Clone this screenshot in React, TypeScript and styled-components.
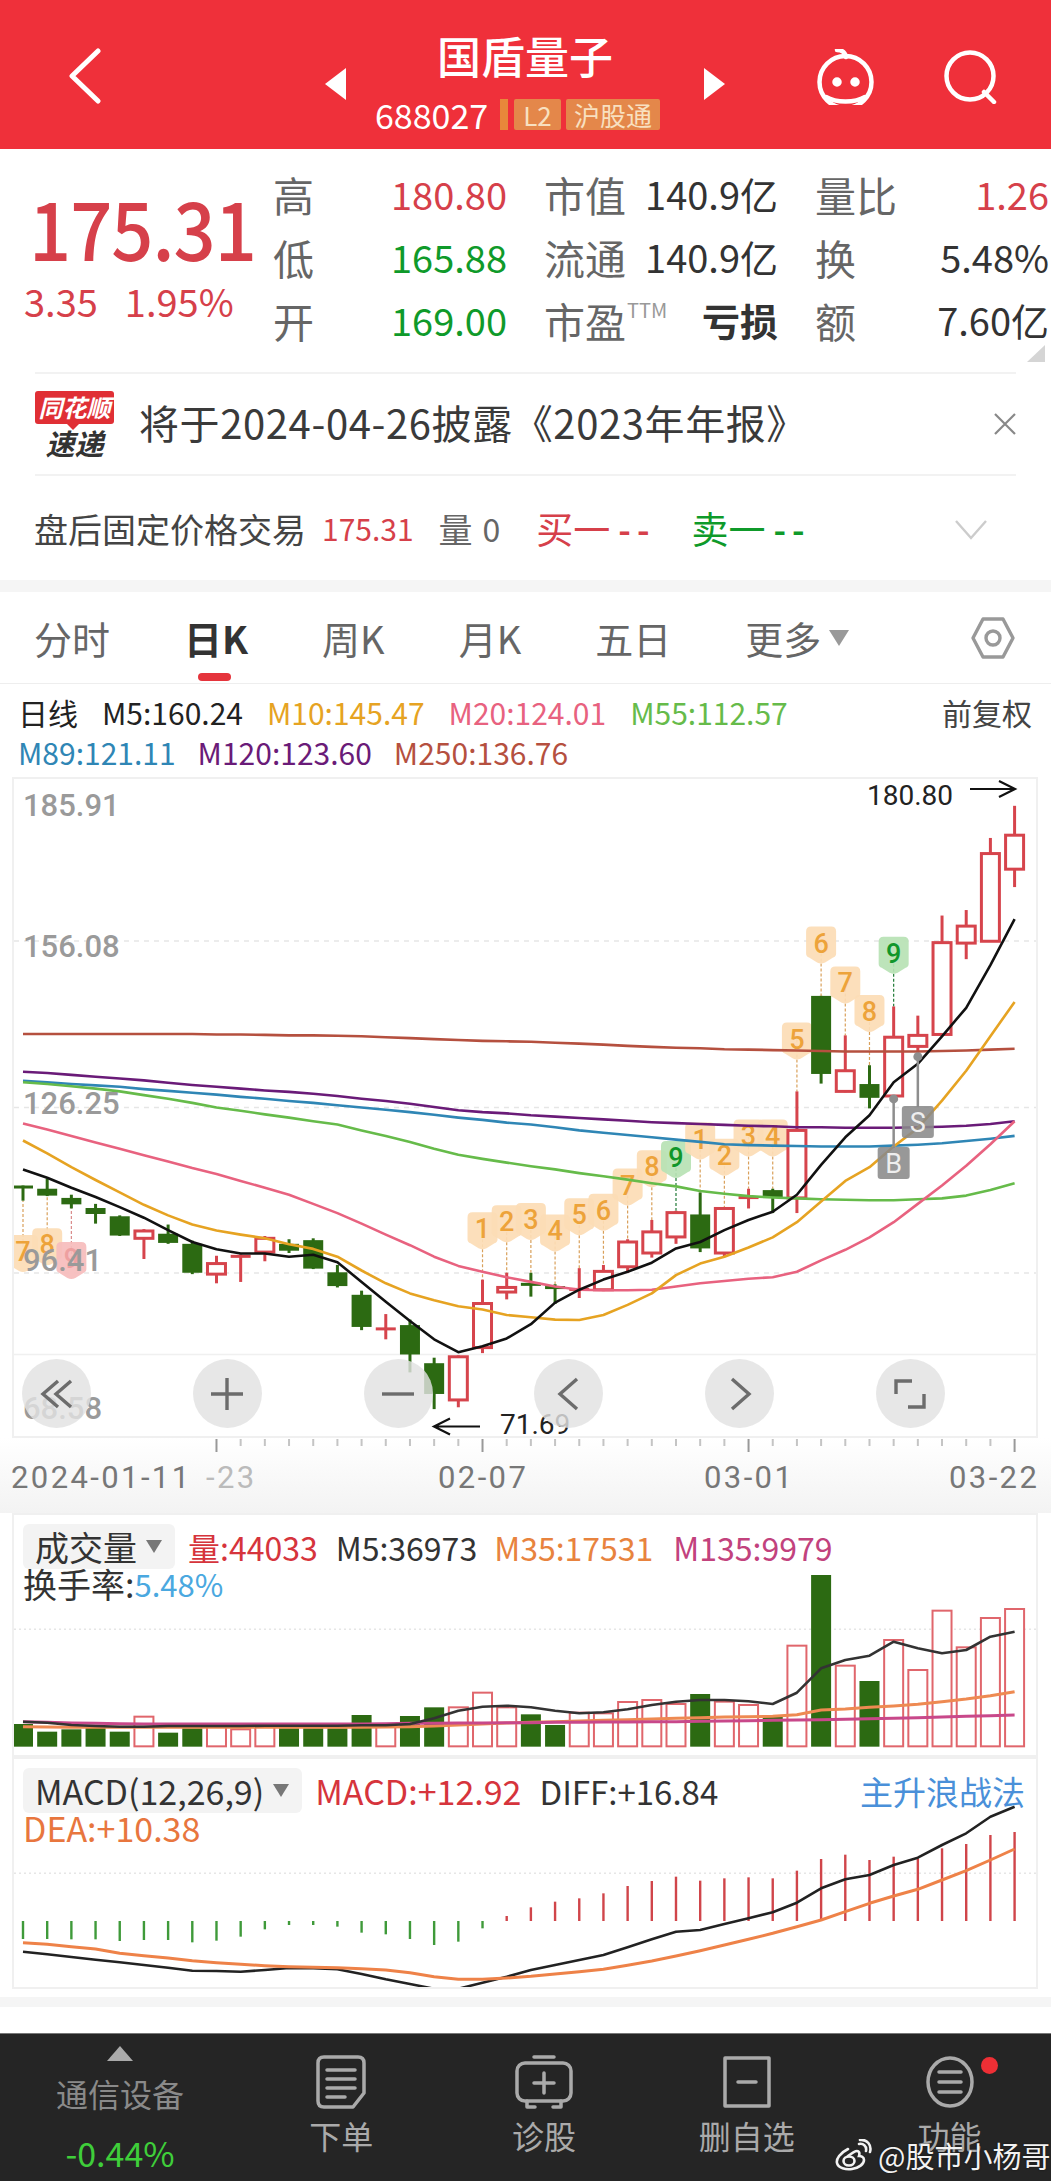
import React from 'react'
import styled, { createGlobalStyle } from 'styled-components'

const GlobalStyle = createGlobalStyle`
  html, body {
    margin: 0;
    padding: 0;
    background: #fff;
  }
  body {
    font-family: "Noto Sans CJK SC", "Liberation Sans", sans-serif;
    color: #333;
  }
`

const RED = '#d6404a'
const GREEN = '#0f9a2a'

// chart data was read off in trace units, these bring it to page pixels
const cx = (i: number) => 23 + 24.185 * i
const ky = (v: number) => 770 + v / 2.178
const vy = (v: number) => 1500 + v / 3
const my = (v: number) => 1750 + v / 3

type Candle = [string, number, number, number, number]

const candles: Candle[] = [
  ['g', 905, 905, 909, 938], ['g', 890, 912, 927, 928], ['g', 925, 932, 946, 955], ['g', 945, 954, 967, 988],
  ['g', 970, 972, 1014, 1015], ['r', 1000, 1004, 1020, 1065], ['g', 990, 1010, 1030, 1032], ['g', 1025, 1032, 1095, 1098],
  ['r', 1058, 1075, 1098, 1118], ['r', 1055, 1056, 1058, 1115], ['r', 1015, 1020, 1050, 1070], ['g', 1022, 1032, 1047, 1052],
  ['g', 1020, 1024, 1086, 1087], ['g', 1078, 1094, 1124, 1127], ['g', 1134, 1143, 1213, 1220], ['r', 1185, 1214, 1217, 1240],
  ['g', 1197, 1209, 1273, 1312], ['g', 1280, 1292, 1359, 1392], ['r', 1275, 1278, 1372, 1388], ['r', 1110, 1162, 1258, 1270],
  ['r', 1095, 1127, 1137, 1153], ['g', 1095, 1117, 1120, 1147], ['g', 1120, 1124, 1126, 1163], ['r', 1085, 1128, 1132, 1150],
  ['r', 1078, 1092, 1132, 1135], ['r', 1022, 1028, 1082, 1095], ['r', 980, 1006, 1052, 1062], ['r', 960, 964, 1017, 1032],
  ['g', 920, 968, 1042, 1050], ['r', 955, 955, 1052, 1060], ['r', 912, 928, 932, 955], ['g', 912, 915, 930, 965],
  ['r', 700, 785, 932, 965], ['g', 492, 492, 662, 683], ['r', 578, 655, 700, 702], ['g', 643, 684, 714, 737],
  ['r', 515, 582, 710, 712], ['r', 535, 578, 602, 625], ['r', 317, 376, 576, 578], ['r', 305, 340, 377, 412],
  ['r', 148, 182, 373, 373], ['r', 78, 142, 216, 255],
]

const maLines: { color: string; data: number[] }[] = [
  { color: '#b5503f', data: [575, 575, 575, 575, 575, 575, 575, 575, 576, 576, 577, 578, 578, 579, 580, 582, 584, 586, 588, 590, 591, 592, 594, 596, 598, 601, 603, 605, 606, 608, 609, 610, 611, 612, 613, 613, 613, 613, 612, 611, 609, 607] },
  { color: '#6a1b78', data: [657, 660, 664, 668, 672, 676, 681, 686, 690, 694, 698, 701, 705, 710, 716, 721, 727, 734, 741, 745, 748, 752, 755, 758, 761, 764, 767, 769, 771, 773, 775, 776, 778, 778, 779, 779, 779, 778, 777, 775, 771, 765] },
  { color: '#2f86b5', data: [677, 680, 684, 687, 690, 695, 699, 703, 707, 712, 716, 721, 725, 730, 735, 740, 745, 751, 757, 762, 768, 772, 778, 785, 790, 795, 800, 805, 810, 815, 817, 818, 819, 820, 820, 820, 818, 816, 813, 808, 803, 797] },
  { color: '#66bb4a', data: [680, 684, 689, 694, 700, 708, 716, 725, 735, 742, 750, 757, 765, 772, 785, 797, 810, 825, 838, 847, 855, 863, 870, 878, 885, 892, 900, 907, 917, 923, 928, 931, 933, 935, 936, 937, 937, 935, 933, 927, 915, 900] },
  { color: '#e8627f', data: [770, 783, 797, 811, 825, 839, 853, 867, 880, 895, 910, 925, 945, 965, 988, 1012, 1035, 1060, 1080, 1093, 1105, 1115, 1125, 1132, 1133, 1133, 1132, 1125, 1118, 1113, 1108, 1105, 1093, 1068, 1045, 1018, 985, 945, 905, 862, 815, 765] },
  { color: '#e6a322', data: [807, 835, 865, 893, 920, 947, 970, 990, 1003, 1012, 1020, 1033, 1043, 1060, 1090, 1118, 1140, 1155, 1168, 1175, 1187, 1192, 1197, 1198, 1187, 1165, 1140, 1100, 1075, 1060, 1040, 1018, 985, 940, 895, 865, 820, 780, 720, 655, 580, 505] },
  { color: '#111', data: [870, 888, 910, 930, 952, 975, 1002, 1028, 1044, 1053, 1053, 1060, 1056, 1072, 1115, 1158, 1200, 1240, 1268, 1255, 1238, 1207, 1160, 1132, 1110, 1093, 1073, 1042, 1028, 1002, 980, 962, 925, 860, 800, 752, 680, 640, 580, 518, 425, 325] },
]

type Tag = [number, number, string, 'o' | 'g' | 'p']

const tags: Tag[] = [
  [0, 1050, '7', 'o'], [1, 1035, '8', 'o'], [2, 1065, '9', 'p'],
  [19, 1000, '1', 'o'], [20, 985, '2', 'o'], [21, 980, '3', 'o'], [22, 1005, '4', 'o'],
  [23, 970, '5', 'o'], [24, 960, '6', 'o'], [25, 905, '7', 'o'], [26, 865, '8', 'o'],
  [27, 845, '9', 'g'], [28, 805, '1', 'o'], [29, 840, '2', 'o'], [30, 798, '3', 'o'],
  [31, 798, '4', 'o'], [32, 587, '5', 'o'], [33, 378, '6', 'o'], [34, 465, '7', 'o'],
  [35, 527, '8', 'o'], [36, 400, '9', 'g'],
]

const tagStyle = {
  o: { fill: '#fcdcb5', text: '#eda33a', stem: '#d9a05a' },
  g: { fill: '#b7e2b4', text: '#10962a', stem: '#1f7a35' },
  p: { fill: '#f6bcbc', text: '#eea0a0', stem: '#d98a8a' },
}

const volumes: [string, number][] = [
  ['g', 672], ['g', 695], ['g', 688], ['g', 680], ['g', 695], ['r', 650], ['g', 698], ['g', 685], ['r', 680], ['r', 688],
  ['r', 680], ['g', 685], ['g', 685], ['g', 685], ['g', 645], ['r', 680], ['g', 648], ['g', 622], ['r', 622], ['r', 578],
  ['r', 622], ['g', 643], ['g', 675], ['r', 638], ['r', 640], ['r', 606], ['r', 600], ['r', 612], ['g', 582], ['r', 605],
  ['r', 615], ['g', 650], ['r', 437], ['g', 225], ['r', 497], ['g', 543], ['r', 420], ['r', 510], ['r', 332], ['r', 442],
  ['r', 354], ['r', 327],
]

const volM5 = [665, 668, 675, 678, 680, 680, 678, 678, 678, 678, 677, 677, 677, 677, 676, 676, 672, 655, 632, 620, 617, 622, 632, 640, 637, 628, 615, 605, 600, 600, 604, 612, 578, 505, 480, 467, 425, 445, 460, 450, 410, 395]
const volM35 = [680, 681, 682, 682, 682, 682, 682, 682, 682, 682, 682, 682, 682, 682, 682, 681, 680, 678, 675, 672, 669, 667, 665, 663, 661, 659, 657, 655, 653, 651, 650, 649, 644, 630, 627, 622, 618, 613, 605, 597, 587, 575]
const volM135 = [665, 667, 669, 670, 671, 672, 672, 672, 672, 672, 672, 672, 672, 672, 672, 671, 670, 670, 669, 669, 668, 668, 667, 667, 666, 666, 665, 665, 664, 663, 662, 661, 660, 659, 658, 656, 655, 653, 651, 649, 647, 645]

const macdBars = [567, 567, 568, 568, 573, 570, 570, 577, 572, 560, 538, 525, 525, 530, 548, 553, 567, 585, 575, 535, 498, 472, 455, 445, 430, 408, 393, 380, 392, 385, 382, 385, 362, 327, 314, 330, 320, 325, 295, 282, 255, 246]
const diffLine = [605, 613, 621, 629, 637, 645, 653, 662, 663, 665, 660, 654, 655, 658, 672, 688, 702, 716, 716, 698, 680, 660, 645, 630, 615, 592, 568, 545, 540, 522, 505, 487, 458, 415, 388, 375, 345, 323, 285, 250, 200, 170]
const deaLine = [578, 583, 590, 597, 610, 617, 624, 632, 638, 643, 647, 650, 652, 653, 656, 660, 668, 680, 688, 688, 684, 679, 672, 665, 658, 646, 633, 618, 602, 585, 568, 550, 530, 510, 485, 460, 438, 418, 390, 362, 330, 297]

const points = (data: number[], toY: (v: number) => number) =>
  data.map((v, i) => `${cx(i).toFixed(1)},${toY(v).toFixed(1)}`).join(' ')

const Page = styled.div`
  width: 1051px;
  height: 2181px;
  background: #fff;
  overflow: hidden;
  position: relative;
  display: flex;
  flex-direction: column;
`

/* top bar */
const NavBar = styled.header`
  height: 149px;
  background: #ef303a;
  display: grid;
  grid-template-columns: 325px 400px 326px;
  align-items: center;
  color: #fff;
  flex: none;
`

const NavLeft = styled.div`
  padding: 2px 0 0 68px;
  display: flex;
`

const NavCenter = styled.div`
  display: flex;
  align-items: center;
  justify-content: space-between;
`

const NavTriangle = styled.span<{ $right?: boolean }>`
  width: 0;
  height: 0;
  border-top: 16px solid transparent;
  border-bottom: 16px solid transparent;
  ${p => (p.$right ? 'border-left: 21px solid #fff;' : 'border-right: 21px solid #fff;')}
  margin-top: 18px;
`

const NavTitleBlock = styled.div`
  display: flex;
  flex-direction: column;
  align-items: center;
`

const NavTitle = styled.div`
  font-size: 44px;
  font-weight: 500;
  line-height: 56px;
  margin-top: 8px;
`

const NavCodeRow = styled.div`
  display: flex;
  align-items: center;
  margin: 16px 0 0 -10px;
  height: 32px;
`

const NavCode = styled.span`
  font-size: 34px;
  line-height: 32px;
  margin-right: 11px;
  width: 114px;
`

const NavBadgeBar = styled.span`
  width: 8px;
  height: 31px;
  background: #e8883a;
  margin-right: 6px;
`

const NavBadge = styled.span<{ $w: number }>`
  width: ${p => p.$w}px;
  height: 31px;
  background: #e4874a;
  border-radius: 2px;
  color: #f8e0c0;
  font-size: 26px;
  line-height: 31px;
  text-align: center;
  margin-right: 5px;
`

const NavRight = styled.div`
  display: flex;
  justify-content: flex-end;
  align-items: center;
  padding: 4px 52px 0 0;
  gap: 66px;
`

/* quote block */
const Quote = styled.section`
  height: 223px;
  flex: none;
  display: flex;
  position: relative;
`

const QuoteLeft = styled.div`
  width: 273px;
  flex: none;
  padding: 35px 0 0 24px;
  box-sizing: border-box;
`

const QuotePrice = styled.div`
  font-size: 74px;
  line-height: 84px;
  color: ${RED};
  font-weight: 500;
  margin-left: 5px;
  letter-spacing: -1px;
  transform: scaleY(1.1);
`

const QuoteChange = styled.div`
  display: flex;
  gap: 27px;
  font-size: 38px;
  line-height: 46px;
  color: ${RED};
  margin-top: 10px;
`

const QuoteGrid = styled.div`
  display: grid;
  grid-template-columns: repeat(3, 234px);
  grid-auto-rows: 63px;
  column-gap: 37px;
  padding-top: 13px;
`

const QuoteCell = styled.div`
  display: flex;
  justify-content: space-between;
  align-items: center;
  white-space: nowrap;
`

const QuoteLabel = styled.span`
  font-size: 41px;
  color: #666;
  display: flex;
  align-items: flex-start;
`

const QuoteTtm = styled.span`
  font-size: 20px;
  line-height: 24px;
  color: #999;
  margin: 8px 0 0 1px;
`

const QuoteValue = styled.span<{ $color?: string; $bold?: boolean }>`
  font-size: 38px;
  color: ${p => p.$color || '#333'};
  font-weight: ${p => (p.$bold ? 700 : 400)};
`

const CornerMark = styled.span`
  position: absolute;
  right: 6px;
  bottom: 10px;
  width: 0;
  height: 0;
  border-left: 18px solid transparent;
  border-bottom: 17px solid #d5d5d5;
`

/* notice + after hours */
const NoticeRow = styled.div`
  height: 100px;
  flex: none;
  margin: 0 35px;
  border-top: 2px solid #f2f2f2;
  border-bottom: 2px solid #f2f2f2;
  display: flex;
  align-items: center;
  gap: 25px;
`

const Logo = styled.div`
  width: 79px;
  flex: none;
  display: flex;
  flex-direction: column;
  align-items: center;
`

const LogoTop = styled.div`
  width: 79px;
  height: 33px;
  background: #e02f35;
  border-radius: 3px;
  color: #fff;
  font-size: 24px;
  line-height: 32px;
  font-weight: 700;
  font-style: italic;
  text-align: center;
  position: relative;
  &::after {
    content: '';
    position: absolute;
    left: 32px;
    bottom: -6px;
    border-left: 6px solid transparent;
    border-right: 6px solid transparent;
    border-top: 6px solid #e02f35;
  }
`

const LogoBottom = styled.div`
  font-size: 29px;
  line-height: 31px;
  font-weight: 700;
  font-style: italic;
  color: #333;
  margin-top: 3px;
`

const NoticeText = styled.div`
  font-size: 40px;
  color: #3a3a3a;
  white-space: nowrap;
  flex: 1;
  margin-top: -4px;
  letter-spacing: 0.6px;
`

const CloseMark = styled.div`
  display: flex;
  flex: none;
`

const AfterHours = styled.div`
  height: 104px;
  flex: none;
  padding-left: 34px;
  display: flex;
  align-items: center;
  white-space: nowrap;
  position: relative;
`

const AfterItem = styled.span<{ $color?: string; $gap?: number; $size?: number; $wide?: boolean }>`
  color: ${p => p.$color || '#444'};
  margin-left: ${p => p.$gap || 0}px;
  font-size: ${p => p.$size || 34}px;
  font-weight: ${p => (p.$wide ? 700 : 400)};
  letter-spacing: ${p => (p.$wide ? 6 : 0)}px;
`

const AfterChevron = styled.div`
  position: absolute;
  left: 955px;
  top: 44px;
  display: flex;
`

const GreyBand = styled.div<{ $h: number; $top?: number }>`
  height: ${p => p.$h}px;
  margin-top: ${p => p.$top || 0}px;
  background: #f5f5f5;
  flex: none;
`

/* period tabs */
const TabBar = styled.nav`
  height: 91px;
  flex: none;
  border-bottom: 1px solid #eee;
  padding-left: 34px;
  display: flex;
  align-items: center;
  gap: 74px;
  position: relative;
`

const Tab = styled.span<{ $active?: boolean }>`
  font-size: 38px;
  color: ${p => (p.$active ? '#333' : '#666')};
  font-weight: ${p => (p.$active ? 700 : 400)};
  position: relative;
  display: flex;
  align-items: center;
  white-space: nowrap;
  ${p => p.$active && `
    &::after {
      content: '';
      position: absolute;
      left: 14px;
      bottom: -16px;
      width: 33px;
      height: 8px;
      border-radius: 4px;
      background: #e5343c;
    }
  `}
`

const TabCaret = styled.span`
  width: 0;
  height: 0;
  border-left: 10px solid transparent;
  border-right: 10px solid transparent;
  border-top: 16px solid #999;
  margin-left: 8px;
`

const TabSetting = styled.div`
  margin-left: auto;
  padding-right: 36px;
  display: flex;
`

/* legend */
const Legend = styled.div`
  height: 85px;
  flex: none;
  padding: 8px 19px 0 18px;
`

const LegendRow = styled.div<{ $gap: number }>`
  height: 40px;
  display: flex;
  align-items: center;
  gap: ${p => p.$gap}px;
  white-space: nowrap;
`

const LegendItem = styled.span<{ $color?: string; $push?: boolean }>`
  font-size: 30px;
  color: ${p => p.$color || '#222'};
  ${p => p.$push && 'margin-left: auto;'}
`

/* chart frames */
const ChartFrame = styled.div<{ $h: number }>`
  position: relative;
  flex: none;
  width: 1026px;
  height: ${p => p.$h}px;
  margin-left: 12px;
  outline: 2px solid #f0f0f0;
  outline-offset: -2px;
`

const ChartSvg = styled.svg`
  display: block;
  width: 100%;
  height: 100%;
`

const PriceLabel = styled.text`
  font-family: Roboto, "Liberation Sans", sans-serif;
  font-size: 31px;
  font-weight: 500;
  fill: #9a9a9a;
`

const ExtremeLabel = styled.text`
  font-family: Roboto, "Liberation Sans", sans-serif;
  font-size: 28px;
  fill: #222;
`

const TagLabel = styled.text`
  font-family: Roboto, "Liberation Sans", sans-serif;
  font-size: 27px;
  font-weight: 500;
  text-anchor: middle;
`

const SignalLabel = styled.text`
  font-family: Roboto, "Liberation Sans", sans-serif;
  font-size: 27px;
  fill: #eee;
  text-anchor: middle;
`

const ChartButtons = styled.div`
  position: absolute;
  left: 10px;
  right: 93px;
  top: 582px;
  display: flex;
  justify-content: space-between;
`

const RoundButton = styled.span`
  width: 69px;
  height: 69px;
  border-radius: 50%;
  background: rgba(226, 226, 226, 0.82);
  display: flex;
  align-items: center;
  justify-content: center;
`

const DateAxis = styled.div`
  height: 75px;
  flex: none;
  background: linear-gradient(180deg, #fff 0%, #f3f3f3 100%);
`

const AxisSvg = styled.svg`
  display: block;
  width: 1051px;
  height: 75px;
`

const AxisLabel = styled.text<{ $dim?: boolean }>`
  font-family: Roboto, "Liberation Sans", sans-serif;
  font-size: 31px;
  letter-spacing: 2.4px;
  fill: ${p => (p.$dim ? '#bbb' : '#777')};
`

const PanelHead = styled.div`
  position: absolute;
  left: 11px;
  right: 13px;
  top: 12px;
  white-space: nowrap;
`

const PanelRow = styled.div<{ $second?: boolean }>`
  display: flex;
  align-items: center;
  height: ${p => (p.$second ? 34 : 45)}px;
  margin-top: ${p => (p.$second ? -3 : -1)}px;
`

const PanelChip = styled.span`
  height: 45px;
  background: #f3f3f3;
  border-radius: 6px;
  padding: 0 13px 0 12px;
  display: flex;
  align-items: center;
  font-size: 34px;
  color: #333;
  margin-right: 13px;
`

const ChipCaret = styled.span`
  width: 0;
  height: 0;
  border-left: 8px solid transparent;
  border-right: 8px solid transparent;
  border-top: 13px solid #777;
  margin-left: 9px;
`

const PanelValue = styled.span<{ $color?: string; $gap?: number; $size?: number; $push?: boolean }>`
  font-size: ${p => p.$size || 32}px;
  color: ${p => p.$color || '#333'};
  margin-left: ${p => (p.$push ? 'auto' : `${p.$gap || 0}px`)};
`

/* footer */
const Footer = styled.footer`
  position: absolute;
  left: 0;
  right: 0;
  bottom: 0;
  height: 147px;
  border-top: 1px solid #777;
  background: #252525;
  display: grid;
  grid-template-columns: 240px repeat(4, 1fr);
  color: #aaa;
`

const FooterItem = styled.div`
  display: flex;
  flex-direction: column;
  align-items: center;
  position: relative;
  padding-top: 21px;
`

const FooterLabel = styled.span`
  font-size: 32px;
  line-height: 38px;
  margin-top: 7px;
  color: #aaa;
`

const FooterSector = styled.div`
  display: flex;
  flex-direction: column;
  align-items: center;
  padding-top: 12px;
`

const SectorCaret = styled.span`
  width: 0;
  height: 0;
  border-left: 13px solid transparent;
  border-right: 13px solid transparent;
  border-bottom: 15px solid #aaa;
`

const SectorName = styled.span`
  font-size: 32px;
  line-height: 40px;
  color: #8a8a8a;
  margin-top: 12px;
`

const SectorPct = styled.span`
  font-size: 34px;
  line-height: 40px;
  color: #3fce3a;
  margin-top: 20px;
`

const RedDot = styled.span`
  position: absolute;
  left: 133px;
  top: 23px;
  width: 17px;
  height: 17px;
  border-radius: 50%;
  background: #ee2f35;
`

const Watermark = styled.div`
  position: absolute;
  left: 834px;
  top: 2134px;
  display: flex;
  align-items: center;
  gap: 6px;
  font-size: 29px;
  color: #f2f2f2;
  white-space: nowrap;
  text-shadow: 0 0 2px rgba(0, 0, 0, 0.6);
`

const RobotIcon = () => (
  <svg width="63" height="56" viewBox="0 0 63 56" fill="none" stroke="#fff" strokeWidth="4.5" strokeLinecap="round">
    <circle cx="31.5" cy="33" r="26" />
    <path d="M23 1c4 0 8 2 9 7" />
    <path d="M12 48c10 6 29 6 39 0" />
    <circle cx="23" cy="33" r="2.5" fill="#fff" />
    <circle cx="41" cy="33" r="2.5" fill="#fff" />
  </svg>
)

const SearchIcon = () => (
  <svg width="56" height="54" viewBox="0 0 56 54" fill="none" stroke="#fff" strokeWidth="4.5" strokeLinecap="round">
    <circle cx="27" cy="26" r="23.5" />
    <path d="M41 42l10 10" />
  </svg>
)

const Candles = () => (
  <g>
    {candles.map(([t, hi, top, bot, lo], i) => {
      const color = t === 'r' ? '#d6444c' : '#2c6a12'
      const x = cx(i)
      const thin = bot - top < 8
      return (
        <g key={i}>
          <line x1={x} x2={x} y1={ky(hi)} y2={ky(lo)} stroke={color} strokeWidth="3" />
          {t === 'r' && !thin ? (
            <rect x={x - 9} y={ky(top)} width="18" height={ky(bot) - ky(top)} fill="#fff" stroke={color} strokeWidth="3" />
          ) : (
            <rect x={x - 10} y={ky(top)} width="20" height={Math.max(ky(bot) - ky(top), 3)} fill={color} />
          )}
        </g>
      )
    })}
  </g>
)

const Tags = () => (
  <g>
    {tags.map(([i, y, n, kind]) => {
      const s = tagStyle[kind]
      const x = cx(i)
      const c = ky(y)
      const below = i < 3
      const candle = candles[i]
      const stemTo = below ? ky(candle[4]) : ky(candle[1])
      return (
        <g key={`${i}-${n}`}>
          <line x1={x} x2={x} y1={c} y2={stemTo} stroke={s.stem} strokeWidth="1.2" strokeDasharray="3 2" />
          <path
            d={`M${x - 10} ${c - 17}h20q5 0 5 5v22q0 3 -3 4l-8 5q-4 2 -8 0l-8 -5q-3 -1 -3 -4v-22q0 -5 5 -5z`}
            fill={s.fill}
            opacity="0.92"
          />
          <TagLabel x={x} y={c + 9} fill={s.text}>{n}</TagLabel>
        </g>
      )
    })}
  </g>
)

const Signal = ({ i, pole, y, text }: { i: number; pole: number; y: number; text: string }) => {
  const x = cx(i)
  return (
    <g>
      <line x1={x} x2={x} y1={ky(pole)} y2={y - 15} stroke="#8e8e8e" strokeWidth="2.5" />
      <circle cx={x} cy={ky(pole) + 2} r="4.5" fill="#8e8e8e" />
      <rect x={x - 16} y={y - 16} width="32" height="32" rx="3" fill="#8a8a8a" opacity="0.88" />
      <SignalLabel x={x} y={y + 10}>{text}</SignalLabel>
    </g>
  )
}

const KChart = () => (
  <ChartSvg viewBox="12 777 1026 661">
    {[941, 1107.5, 1273].map(y => (
      <line key={y} x1="14" x2="1036" y1={y} y2={y} stroke="#e6e6e6" strokeWidth="1.5" strokeDasharray="5 5" />
    ))}
    <line x1="14" x2="1036" y1="1354.5" y2="1354.5" stroke="#f0f0f0" strokeWidth="1.5" />
    <Tags />
    <Candles />
    {maLines.map(l => (
      <polyline key={l.color} points={points(l.data, ky)} fill="none" stroke={l.color} strokeWidth="2.6" strokeLinejoin="round" />
    ))}
    <Signal i={36} pole={712} y={1163} text="B" />
    <Signal i={37} pole={620} y={1122} text="S" />
    <PriceLabel x="23" y="816">185.91</PriceLabel>
    <PriceLabel x="23" y="957">156.08</PriceLabel>
    <PriceLabel x="23" y="1114">126.25</PriceLabel>
    <PriceLabel x="23" y="1271">96.41</PriceLabel>
    <PriceLabel x="23" y="1419">68.58</PriceLabel>
    <ExtremeLabel x="867" y="805">180.80</ExtremeLabel>
    <path d="M970 789h44m-15 -8l16 8l-16 8" fill="none" stroke="#111" strokeWidth="2.2" />
    <ExtremeLabel x="500" y="1434">71.69</ExtremeLabel>
    <path d="M480 1426.5h-45m15 -8l-16 8l16 8" fill="none" stroke="#111" strokeWidth="2.2" />
  </ChartSvg>
)

const ButtonIcon = ({ d }: { d: string }) => (
  <svg width="38" height="38" viewBox="0 0 38 38" fill="none" stroke="#6c6c6c" strokeWidth="3.4">
    <path d={d} />
  </svg>
)

const AxisTicks = () => (
  <AxisSvg viewBox="0 1438 1051 75">
    {candles.map((_, i) => {
      if (i < 8) return null
      const major = i === 8 || i === 19 || i === 30 || i === 41
      return (
        <line key={i} x1={cx(i)} x2={cx(i)} y1="1439" y2={major ? 1452 : 1446} stroke={major ? '#999' : '#c4c4c4'} strokeWidth="2" />
      )
    })}
    <AxisLabel x="11" y="1488">2024-01-11</AxisLabel>
    <AxisLabel x="206" y="1488" $dim>-23</AxisLabel>
    <AxisLabel x="438" y="1488">02-07</AxisLabel>
    <AxisLabel x="704" y="1488">03-01</AxisLabel>
    <AxisLabel x="949" y="1488">03-22</AxisLabel>
  </AxisSvg>
)

const VolumeChart = () => (
  <ChartSvg viewBox="12 1513 1026 244">
    <line x1="14" x2="1036" y1={vy(388)} y2={vy(388)} stroke="#e6e6e6" strokeWidth="1.5" strokeDasharray="2 3" />
    {volumes.map(([t, top], i) =>
      t === 'g' ? (
        <rect key={i} x={cx(i) - 10} y={vy(top)} width="20" height={vy(740) - vy(top)} fill="#2c6a12" />
      ) : (
        <rect key={i} x={cx(i) - 9.5} y={vy(top)} width="19" height={vy(739) - vy(top)} fill="#fff" stroke="#e0666c" strokeWidth="2" />
      ),
    )}
    <polyline points={points(volM35, vy)} fill="none" stroke="#ee8a52" strokeWidth="3" strokeLinejoin="round" />
    <polyline points={points(volM135, vy)} fill="none" stroke="#c8488a" strokeWidth="3" strokeLinejoin="round" />
    <polyline points={points(volM5, vy)} fill="none" stroke="#333" strokeWidth="2.6" strokeLinejoin="round" />
  </ChartSvg>
)

const MacdChart = () => (
  <ChartSvg viewBox="12 1757 1026 232">
    <line x1="14" x2="1036" y1={my(370)} y2={my(370)} stroke="#e6e6e6" strokeWidth="1.5" strokeDasharray="2 3" />
    {macdBars.map((v, i) => (
      <line key={i} x1={cx(i)} x2={cx(i)} y1={my(513)} y2={my(v)} stroke={v > 513 ? '#3f9a3a' : '#d0454a'} strokeWidth="2.4" />
    ))}
    <polyline points={points(diffLine, my)} fill="none" stroke="#222" strokeWidth="2.6" strokeLinejoin="round" />
    <polyline points={points(deaLine, my)} fill="none" stroke="#ee8248" strokeWidth="3" strokeLinejoin="round" />
  </ChartSvg>
)

const Glyph = ({ w, h, children }: { w: number; h: number; children: React.ReactNode }) => (
  <svg width={w} height={h} viewBox={`0 0 ${w} ${h}`} fill="none" stroke="#aaa" strokeWidth="3.5" strokeLinecap="round" strokeLinejoin="round">
    {children}
  </svg>
)

const OrderIcon = () => (
  <Glyph w={50} h={54}>
    <path d="M8 2h34q6 0 6 6v30l-11 14H8q-6 0 -6 -6V8q0 -6 6 -6z" />
    <path d="M11 15h28M11 24h28M11 33h28M11 42h18" />
  </Glyph>
)

const DiagnoseIcon = () => (
  <Glyph w={58} h={54}>
    <path d="M19 2h20" />
    <rect x="2" y="8" width="54" height="38" rx="8" />
    <path d="M29 18v20M19 28h20" />
    <path d="M12 46v6h8M46 46v6h-8" />
  </Glyph>
)

const RemoveIcon = () => (
  <Glyph w={48} h={54}>
    <rect x="2" y="3" width="44" height="48" />
    <path d="M15 27h18" />
  </Glyph>
)

const MoreIcon = () => (
  <Glyph w={50} h={54}>
    <ellipse cx="25" cy="27" rx="22" ry="24" />
    <path d="M14 17h22M14 27h22M14 37h22" />
  </Glyph>
)

const WeiboIcon = () => (
  <svg width="38" height="32" viewBox="0 0 38 32" fill="none" stroke="#f2f2f2" strokeWidth="2.6" strokeLinecap="round">
    <path d="M14 10C6 14 2 20 3 24c1 5 9 7 15 6 7-1 12-5 12-9 0-3-3-4-5-4 1-3 0-5-2-5-2 0-5 2-9 5" />
    <ellipse cx="15" cy="22" rx="5.5" ry="4.5" />
    <path d="M25 5c4-1 8 2 7 7M26 1c7-1 12 5 10 12" />
  </svg>
)

export default function App() {
  return (
    <Page>
      <GlobalStyle />
      <NavBar>
        <NavLeft>
          <svg width="33" height="56" viewBox="0 0 33 56" fill="none" stroke="#fff" strokeWidth="5" strokeLinecap="round" strokeLinejoin="round">
            <path d="M30 3L4 28l26 25" />
          </svg>
        </NavLeft>
        <NavCenter>
          <NavTriangle />
          <NavTitleBlock>
            <NavTitle>国盾量子</NavTitle>
            <NavCodeRow>
              <NavCode>688027</NavCode>
              <NavBadgeBar />
              <NavBadge $w={47}>L2</NavBadge>
              <NavBadge $w={94}>沪股通</NavBadge>
            </NavCodeRow>
          </NavTitleBlock>
          <NavTriangle $right />
        </NavCenter>
        <NavRight>
          <RobotIcon />
          <SearchIcon />
        </NavRight>
      </NavBar>

      <Quote>
        <QuoteLeft>
          <QuotePrice>175.31</QuotePrice>
          <QuoteChange>
            <span>3.35</span>
            <span>1.95%</span>
          </QuoteChange>
        </QuoteLeft>
        <QuoteGrid>
          <QuoteCell><QuoteLabel>高</QuoteLabel><QuoteValue $color={RED}>180.80</QuoteValue></QuoteCell>
          <QuoteCell><QuoteLabel>市值</QuoteLabel><QuoteValue>140.9亿</QuoteValue></QuoteCell>
          <QuoteCell><QuoteLabel>量比</QuoteLabel><QuoteValue $color={RED}>1.26</QuoteValue></QuoteCell>
          <QuoteCell><QuoteLabel>低</QuoteLabel><QuoteValue $color={GREEN}>165.88</QuoteValue></QuoteCell>
          <QuoteCell><QuoteLabel>流通</QuoteLabel><QuoteValue>140.9亿</QuoteValue></QuoteCell>
          <QuoteCell><QuoteLabel>换</QuoteLabel><QuoteValue>5.48%</QuoteValue></QuoteCell>
          <QuoteCell><QuoteLabel>开</QuoteLabel><QuoteValue $color={GREEN}>169.00</QuoteValue></QuoteCell>
          <QuoteCell><QuoteLabel>市盈<QuoteTtm>TTM</QuoteTtm></QuoteLabel><QuoteValue $bold>亏损</QuoteValue></QuoteCell>
          <QuoteCell><QuoteLabel>额</QuoteLabel><QuoteValue>7.60亿</QuoteValue></QuoteCell>
        </QuoteGrid>
        <CornerMark />
      </Quote>

      <NoticeRow>
        <Logo>
          <LogoTop>同花顺</LogoTop>
          <LogoBottom>速递</LogoBottom>
        </Logo>
        <NoticeText>将于2024-04-26披露《2023年年报》</NoticeText>
        <CloseMark>
          <svg width="22" height="22" viewBox="0 0 22 22" stroke="#888" strokeWidth="2.2">
            <path d="M1 1l20 20M21 1L1 21" />
          </svg>
        </CloseMark>
      </NoticeRow>

      <AfterHours>
        <AfterItem>盘后固定价格交易</AfterItem>
        <AfterItem $color={RED} $gap={16} $size={30}>175.31</AfterItem>
        <AfterItem $color="#666" $gap={25}>量</AfterItem>
        <AfterItem $color="#666" $gap={10} $size={32}>0</AfterItem>
        <AfterItem $color={RED} $gap={36} $size={37}>买一</AfterItem>
        <AfterItem $color={RED} $gap={8} $wide>--</AfterItem>
        <AfterItem $color={GREEN} $gap={36} $size={37}>卖一</AfterItem>
        <AfterItem $color={GREEN} $gap={8} $wide>--</AfterItem>
        <AfterChevron>
          <svg width="32" height="20" viewBox="0 0 32 20" fill="none" stroke="#ccc" strokeWidth="2.4">
            <path d="M1 1l15 17L31 1" />
          </svg>
        </AfterChevron>
      </AfterHours>

      <GreyBand $h={12} />

      <TabBar>
        <Tab>分时</Tab>
        <Tab $active>日K</Tab>
        <Tab>周K</Tab>
        <Tab>月K</Tab>
        <Tab>五日</Tab>
        <Tab>更多<TabCaret /></Tab>
        <TabSetting>
          <svg width="44" height="42" viewBox="0 0 44 42" fill="none" stroke="#999" strokeWidth="3.4" strokeLinejoin="round">
            <path d="M12 2h20l10 19-10 19H12L2 21z" />
            <circle cx="22" cy="21" r="7" />
          </svg>
        </TabSetting>
      </TabBar>

      <Legend>
        <LegendRow $gap={24}>
          <LegendItem>日线</LegendItem>
          <LegendItem>M5:160.24</LegendItem>
          <LegendItem $color="#e6a322">M10:145.47</LegendItem>
          <LegendItem $color="#e8627f">M20:124.01</LegendItem>
          <LegendItem $color="#66bb4a">M55:112.57</LegendItem>
          <LegendItem $color="#444" $push>前复权</LegendItem>
        </LegendRow>
        <LegendRow $gap={22}>
          <LegendItem $color="#2f86b5">M89:121.11</LegendItem>
          <LegendItem $color="#6a1b78">M120:123.60</LegendItem>
          <LegendItem $color="#b5503f">M250:136.76</LegendItem>
        </LegendRow>
      </Legend>

      <ChartFrame $h={661}>
        <KChart />
        <ChartButtons>
          <RoundButton><ButtonIcon d="M20 6L5 19l15 13M33 6L18 19l15 13" /></RoundButton>
          <RoundButton><ButtonIcon d="M19 3v32M3 19h32" /></RoundButton>
          <RoundButton><ButtonIcon d="M3 19h32" /></RoundButton>
          <RoundButton><ButtonIcon d="M27 4L10 19l17 15" /></RoundButton>
          <RoundButton><ButtonIcon d="M11 4l17 15-17 15" /></RoundButton>
          <RoundButton><ButtonIcon d="M21 6H5v13M17 32h16V19" /></RoundButton>
        </ChartButtons>
      </ChartFrame>

      <DateAxis>
        <AxisTicks />
      </DateAxis>

      <ChartFrame $h={244}>
        <VolumeChart />
        <PanelHead>
          <PanelRow>
            <PanelChip>成交量<ChipCaret /></PanelChip>
            <PanelValue $color="#d6343c">量:44033</PanelValue>
            <PanelValue $gap={18}>M5:36973</PanelValue>
            <PanelValue $color="#e8833e" $gap={17}>M35:17531</PanelValue>
            <PanelValue $color="#c2427d" $gap={20}>M135:9979</PanelValue>
          </PanelRow>
          <PanelRow $second>
            <PanelValue $size={34}>换手率:</PanelValue>
            <PanelValue $color="#4aa8e0" $size={31}>5.48%</PanelValue>
          </PanelRow>
        </PanelHead>
      </ChartFrame>

      <ChartFrame $h={232}>
        <MacdChart />
        <PanelHead>
          <PanelRow>
            <PanelChip>MACD(12,26,9)<ChipCaret /></PanelChip>
            <PanelValue $color="#d6343c" $size={34}>MACD:+12.92</PanelValue>
            <PanelValue $size={33} $gap={18}>DIFF:+16.84</PanelValue>
            <PanelValue $color="#4a90d9" $size={33} $push>主升浪战法</PanelValue>
          </PanelRow>
          <PanelRow $second>
            <PanelValue $color="#e8763e" $size={34}>DEA:+10.38</PanelValue>
          </PanelRow>
        </PanelHead>
      </ChartFrame>

      <GreyBand $h={10} $top={8} />

      <Footer>
        <FooterSector>
          <SectorCaret />
          <SectorName>通信设备</SectorName>
          <SectorPct>-0.44%</SectorPct>
        </FooterSector>
        <FooterItem>
          <OrderIcon />
          <FooterLabel>下单</FooterLabel>
        </FooterItem>
        <FooterItem>
          <DiagnoseIcon />
          <FooterLabel>诊股</FooterLabel>
        </FooterItem>
        <FooterItem>
          <RemoveIcon />
          <FooterLabel>删自选</FooterLabel>
        </FooterItem>
        <FooterItem>
          <MoreIcon />
          <FooterLabel>功能</FooterLabel>
          <RedDot />
        </FooterItem>
      </Footer>

      <Watermark>
        <WeiboIcon />
        <span>@股市小杨哥</span>
      </Watermark>
    </Page>
  )
}
